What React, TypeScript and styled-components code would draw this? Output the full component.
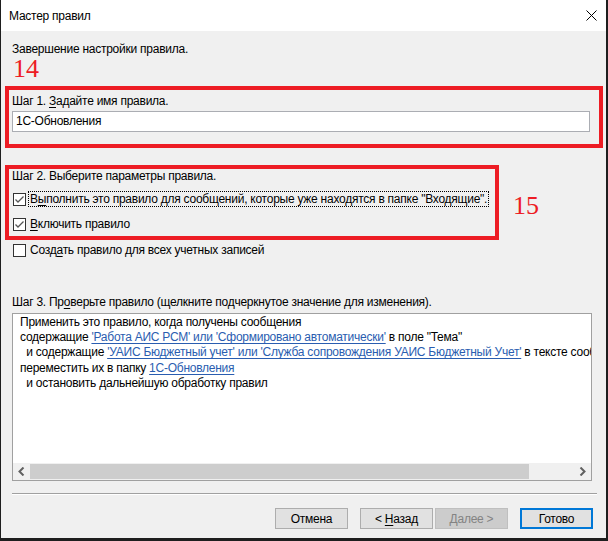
import React from 'react';
import styled, { createGlobalStyle } from 'styled-components';

const uiFont = `"Segoe UI", "Liberation Sans", "Noto Sans", sans-serif`;
const red = '#ed1c24';

const GlobalStyle = createGlobalStyle`
  html,
  body {
    margin: 0;
    padding: 0;
    background: #1e1e1e;
  }

  body {
    font-family: ${uiFont};
    font-size: 12px;
    letter-spacing: -0.25px;
    color: #000;
  }
`;

const Window = styled.div`
  position: relative;
  margin-left: 1px;
  width: 605px;
  height: 538px;
  background: #f0f0f0;
  display: flex;
  flex-direction: column;
  overflow: hidden;
`;

const TitleBar = styled.div`
  height: 31px;
  flex-shrink: 0;
  background: #fff;
  display: flex;
  align-items: center;
  justify-content: space-between;
  padding: 0 9px 0 8px;
  font-size: 12px;
`;

const CloseIcon = () => (
  <svg width="11" height="11" viewBox="0 0 11 11" style={{ marginTop: -1 }}>
    <path d="M0.5 0.5 L10.5 10.5 M10.5 0.5 L0.5 10.5" stroke="#000" strokeWidth="1" fill="none" />
  </svg>
);

const Content = styled.div`
  flex: 1;
  display: flex;
  flex-direction: column;
  padding: 10px 0 0 11px;
`;

const Line = styled.div<{ $top?: number }>`
  height: 16px;
  line-height: 16px;
  margin-top: ${(p) => p.$top ?? 0}px;
  white-space: nowrap;
`;

const Key = styled.span`
  text-decoration: underline;
  text-underline-offset: 2px;
`;

const TextInput = styled.div`
  margin-top: 2px;
  width: 578px;
  height: 21px;
  box-sizing: border-box;
  border: 1px solid #abadb3;
  background: #fff;
  padding-left: 3px;
  line-height: 19px;
`;

const CheckRow = styled.div<{ $top: number }>`
  display: flex;
  align-items: center;
  height: 16px;
  margin-top: ${(p) => p.$top}px;
  padding-left: 1px;
  white-space: nowrap;
`;

const Box = styled.div`
  width: 13px;
  height: 13px;
  box-sizing: border-box;
  border: 1px solid #333;
  background: #fff;
  display: flex;
  align-items: center;
  justify-content: center;
  margin-right: 4px;
  flex-shrink: 0;
`;

const CheckLabel = styled.span<{ $focus?: boolean }>`
  line-height: 14px;
  padding: 0 1px;
  margin-left: -2px;
  border: 1px dotted ${(p) => (p.$focus ? '#000' : 'transparent')};
`;

const Check = ({ checked }: { checked: boolean }) => (
  <Box>
    {checked && (
      <svg width="11" height="11" viewBox="0 0 11 11">
        <path d="M1.5 5.5 L4 8 L9.5 2.5" stroke="#555" strokeWidth="1.3" fill="none" />
      </svg>
    )}
  </Box>
);

const RuleBox = styled.div`
  margin-top: 3px;
  width: 580px;
  height: 168px;
  box-sizing: border-box;
  border: 1px solid #a0a0a0;
  background: #fff;
  display: flex;
  flex-direction: column;
  overflow: hidden;
`;

const RuleText = styled.div`
  flex: 1;
  padding: 1px 0 0 7px;
  line-height: 15.2px;
  white-space: pre;
  overflow: hidden;
`;

const Link = styled.span`
  color: #2a5db0;
  text-decoration: underline;
  text-underline-offset: 2px;
`;

const HScroll = styled.div`
  height: 17px;
  flex-shrink: 0;
  background: #f0f0f0;
  display: flex;
  align-items: center;
`;

const Arrow = styled.div`
  width: 17px;
  height: 17px;
  display: flex;
  align-items: center;
  justify-content: center;
`;

const Thumb = styled.div`
  height: 15px;
  width: 499px;
  background: #cdcdcd;
`;

const Track = styled.div`
  flex: 1;
`;

const Separator = styled.div`
  margin-top: 12px;
  width: 585px;
  height: 1px;
  background: #a0a0a0;
  border-bottom: 1px solid #fff;
`;

const Buttons = styled.div`
  margin-top: 13px;
  display: flex;
  justify-content: flex-end;
  padding-right: 13px;
`;

const Button = styled.div<{ $gap?: number; $default?: boolean; $disabled?: boolean }>`
  width: 73px;
  height: 21px;
  box-sizing: border-box;
  margin-left: ${(p) => p.$gap ?? 0}px;
  display: flex;
  align-items: center;
  justify-content: center;
  background: ${(p) => (p.$disabled ? '#cccccc' : '#e1e1e1')};
  border: ${(p) => (p.$default ? '2px solid #0078d7' : p.$disabled ? '1px solid #bfbfbf' : '1px solid #adadad')};
  color: ${(p) => (p.$disabled ? '#838383' : '#000')};
`;

const Frame = styled.div<{ $left: number; $top: number; $w: number; $h: number }>`
  position: absolute;
  left: ${(p) => p.$left}px;
  top: ${(p) => p.$top}px;
  width: ${(p) => p.$w}px;
  height: ${(p) => p.$h}px;
  box-sizing: border-box;
  border: 4px solid ${red};
  pointer-events: none;
`;

const Mark = styled.div<{ $left: number; $top: number }>`
  position: absolute;
  left: ${(p) => p.$left}px;
  top: ${(p) => p.$top}px;
  font-family: "Liberation Serif", serif;
  font-size: 26px;
  line-height: 26px;
  letter-spacing: 0;
  color: ${red};
`;

const ArrowGlyph = ({ right }: { right?: boolean }) => (
  <svg width="7" height="9" viewBox="0 0 7 9">
    <path
      d={right ? 'M1.5 0.5 L5.5 4.5 L1.5 8.5' : 'M5.5 0.5 L1.5 4.5 L5.5 8.5'}
      stroke="#606060"
      strokeWidth="2"
      fill="none"
    />
  </svg>
);

export default function App() {
  return (
    <>
      <GlobalStyle />
      <Window>
        <TitleBar>
          <span>Мастер правил</span>
          <CloseIcon />
        </TitleBar>
        <Content>
          <Line>Завершение настройки правила.</Line>

          <Line $top={36}>
            Шаг 1. <Key>З</Key>адайте имя правила.
          </Line>
          <TextInput>1С-Обновления</TextInput>

          <Line $top={36}>Шаг 2. Выберите параметры правила.</Line>
          <CheckRow $top={7}>
            <Check checked />
            <CheckLabel $focus>
              В<Key>ы</Key>полнить это правило для сообщений, которые уже находятся в папке "Входящие".
            </CheckLabel>
          </CheckRow>
          <CheckRow $top={9}>
            <Check checked />
            <CheckLabel>
              <Key>В</Key>ключить правило
            </CheckLabel>
          </CheckRow>
          <CheckRow $top={10}>
            <Check checked={false} />
            <CheckLabel>
              Созд<Key>а</Key>ть правило для всех учетных записей
            </CheckLabel>
          </CheckRow>

          <Line $top={36}>
            Шаг 3. Пр<Key>о</Key>верьте правило (щелкните подчеркнутое значение для изменения).
          </Line>
          <RuleBox>
            <RuleText>
              {'Применить это правило, когда получены сообщения\n'}
              {'содержащие '}
              <Link>'Работа АИС РСМ' или 'Сформировано автоматически'</Link>
              {' в поле "Тема"\n'}
              {'  и содержащие '}
              <Link>'УАИС Бюджетный учет' или 'Служба сопровождения УАИС Бюджетный Учет'</Link>
              {' в тексте сообщения\n'}
              {'переместить их в папку '}
              <Link>1С-Обновления</Link>
              {'\n'}
              {'  и остановить дальнейшую обработку правил'}
            </RuleText>
            <HScroll>
              <Arrow>
                <ArrowGlyph />
              </Arrow>
              <Thumb />
              <Track />
              <Arrow>
                <ArrowGlyph right />
              </Arrow>
            </HScroll>
          </RuleBox>

          <Separator />
          <Buttons>
            <Button>Отмена</Button>
            <Button $gap={12}>
              &lt;&nbsp;<Key>Н</Key>азад
            </Button>
            <Button $gap={2} $disabled>
              <Key>Д</Key>алее &gt;
            </Button>
            <Button $gap={12} $default>
              Готово
            </Button>
          </Buttons>
        </Content>

        <Mark $left={12} $top={56}>14</Mark>
        <Frame $left={4} $top={86} $w={598} $h={62} />
        <Frame $left={4} $top={165} $w={494} $h={75} />
        <Mark $left={512} $top={193}>15</Mark>
      </Window>
    </>
  );
}
